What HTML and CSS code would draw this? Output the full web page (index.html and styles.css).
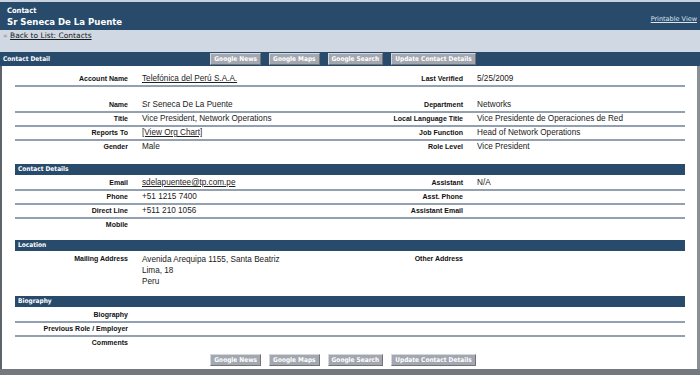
FILE: index.html
```html
<!DOCTYPE html>
<html lang="en">
<head>
    <meta charset="UTF-8">
    <title>Contact - Sr Seneca De La Puente</title>
    <link rel="stylesheet" href="styles.css">
</head>
<body>

<div class="page">
    <div class="top-bar">
        <div class="title-block">
            <div class="kicker">Contact</div>
            <h1>Sr Seneca De La Puente</h1>
        </div>
        <a class="print-link" href="#">Printable View</a>
    </div>

    <div class="crumb">
        <span class="raquo">&laquo;</span> <a href="#">Back to List: Contacts</a>
    </div>

    <div class="panel-head">
        <span class="panel-title">Contact Detail</span>
        <div class="actions">
            <button>Google News</button>
            <button>Google Maps</button>
            <button>Google Search</button>
            <button>Update Contact Details</button>
        </div>
    </div>

    <div class="panel-body">
        <table class="fields">
            <colgroup><col class="c-label"><col class="c-value"><col class="c-label"><col class="c-value"></colgroup>
            <tr class="line">
                <th>Account Name</th><td><a href="#">Telefónica del Perú S.A.A.</a></td>
                <th>Last Verified</th><td>5/25/2009</td>
            </tr>
            <tr class="spacer"><td colspan="4"></td></tr>
            <tr class="line">
                <th>Name</th><td>Sr Seneca De La Puente</td>
                <th>Department</th><td>Networks</td>
            </tr>
            <tr class="line">
                <th>Title</th><td>Vice President, Network Operations</td>
                <th>Local Language Title</th><td>Vice Presidente de Operaciones de Red</td>
            </tr>
            <tr class="line">
                <th>Reports To</th><td><a href="#">[View Org Chart]</a></td>
                <th>Job Function</th><td>Head of Network Operations</td>
            </tr>
            <tr>
                <th>Gender</th><td>Male</td>
                <th>Role Level</th><td>Vice President</td>
            </tr>
        </table>

        <div class="section-bar">Contact Details</div>
        <table class="fields contact">
            <colgroup><col class="c-label"><col class="c-value"><col class="c-label"><col class="c-value"></colgroup>
            <tr class="line">
                <th>Email</th><td><a href="#">sdelapuentee@tp.com.pe</a></td>
                <th>Assistant</th><td>N/A</td>
            </tr>
            <tr class="line">
                <th>Phone</th><td>+51 1215 7400</td>
                <th>Asst. Phone</th><td></td>
            </tr>
            <tr class="line">
                <th>Direct Line</th><td>+511 210 1056</td>
                <th>Assistant Email</th><td></td>
            </tr>
            <tr>
                <th>Mobile</th><td></td>
                <th></th><td></td>
            </tr>
        </table>

        <div class="section-bar">Location</div>
        <table class="fields address">
            <colgroup><col class="c-label"><col class="c-value"><col class="c-label"><col class="c-value"></colgroup>
            <tr>
                <th>Mailing Address</th>
                <td>Avenida Arequipa 1155, Santa Beatriz<br>Lima, 18<br>Peru</td>
                <th>Other Address</th><td></td>
            </tr>
        </table>

        <div class="section-bar">Biography</div>
        <table class="fields last">
            <colgroup><col class="c-label"><col class="c-value"><col class="c-label"><col class="c-value"></colgroup>
            <tr class="line"><th>Biography</th><td colspan="3"></td></tr>
            <tr class="line"><th>Previous Role / Employer</th><td colspan="3"></td></tr>
            <tr><th>Comments</th><td colspan="3"></td></tr>
        </table>

        <div class="actions bottom">
            <button>Google News</button>
            <button>Google Maps</button>
            <button>Google Search</button>
            <button>Update Contact Details</button>
        </div>
    </div>
    <div class="page-foot"></div>
</div>

</body>
</html>
```

FILE: styles.css
```css
body {
    margin: 0;
    background-color: #fff;
    font-family: "DejaVu Sans", Verdana, sans-serif;
}
.page {
    width: 700px;
    border-top: 2px solid #c9d2de;
}
.top-bar {
    display: flex;
    justify-content: space-between;
    align-items: center;
    background-color: #284b6c;
    color: #fff;
    height: 28px;
    padding: 0 3px 0 7px;
}
.title-block {
    padding-top: 2px;
    font-stretch: condensed;
}
.kicker {
    font-size: 7.5px;
    font-weight: bold;
    line-height: 10px;
}
.top-bar h1 {
    margin: 0;
    font-size: 9.5px;
    line-height: 12px;
}
.print-link {
    color: #dde4ee;
    font-size: 6.5px;
    margin-top: 6px;
}
.crumb {
    background-color: #d0d8e3;
    height: 22px;
    padding: 1px 3px;
    font-size: 7.5px;
    box-sizing: border-box;
    line-height: 10px;
}
.crumb a {
    color: #1a1a1a;
}
.raquo {
    color: #888;
}
.panel-head {
    display: flex;
    align-items: center;
    background-color: #284b6c;
    color: #fff;
    height: 14px;
    padding: 0 2px;
    position: relative;
}
.panel-title {
    font-size: 6.5px;
    font-weight: bold;
    font-stretch: condensed;
    position: absolute;
    left: 3px;
}
.actions {
    display: flex;
    justify-content: center;
    gap: 8px;
    width: 100%;
    padding-right: 14px;
    box-sizing: border-box;
}
.actions button {
    background-color: #a3a7af;
    color: #fff;
    font-family: "DejaVu Sans", Verdana, sans-serif;
    font-size: 6.5px;
    font-weight: bold;
    font-stretch: condensed;
    height: 12px;
    padding: 0 3px;
    border: 1px solid;
    border-color: #d4d7dc #6f737b #6f737b #d4d7dc;
    line-height: 9px;
}
.panel-body {
    border-left: 2px solid #5f636a;
    border-right: 3px solid #8b8f96;
    padding: 7px 12px 0 13px;
    height: 296px;
}
.fields {
    width: 670px;
    border-collapse: collapse;
    table-layout: fixed;
    font-family: "Liberation Sans", Arial, sans-serif;
    margin-bottom: 11px;
}
.fields col.c-label {
    width: 120px;
}
.fields col.c-value {
    width: 215px;
}
.fields th {
    padding: 1px 7px 1px 0;
    text-align: right;
    font-size: 7px;
    line-height: 10px;
    color: #111;
    vertical-align: top;
}
.fields td {
    padding: 1px 0 1px 7px;
    font-size: 8.2px;
    line-height: 10px;
    color: #222;
    vertical-align: top;
}
.fields td a {
    color: #222;
}
.fields tr.line {
    border-bottom: 2px solid #93a0b0;
}
.fields tr.spacer td {
    height: 12px;
    padding: 0;
}
.fields.contact {
    margin-bottom: 9px;
}
.fields.address {
    margin-bottom: 8px;
}
.fields.address td {
    line-height: 11px;
}
.fields.last {
    margin-bottom: 0;
}
.section-bar {
    background-color: #284b6c;
    color: #fff;
    font-size: 6.5px;
    font-weight: bold;
    font-stretch: condensed;
    height: 11px;
    line-height: 11px;
    padding-left: 3px;
    width: 667px;
    margin-bottom: 2px;
}
.actions.bottom {
    margin-top: 5px;
}
.page-foot {
    height: 6px;
    background-color: #74787f;
}
```
